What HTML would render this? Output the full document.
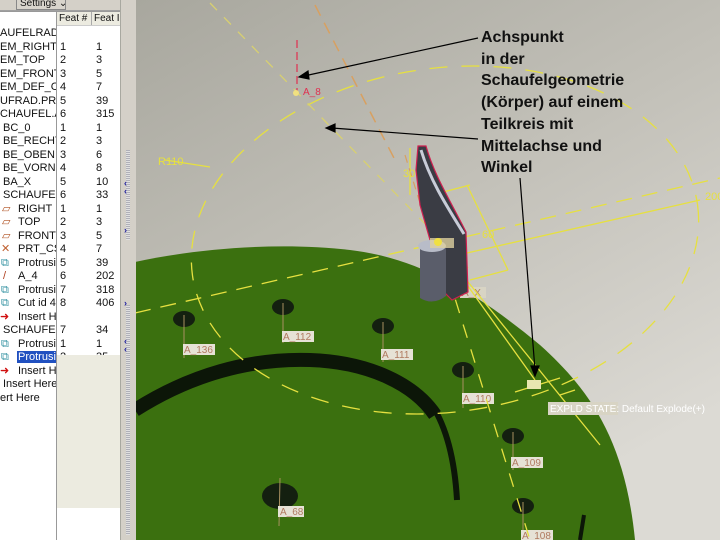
<!DOCTYPE html>
<html><head><meta charset="utf-8"><style>
*{margin:0;padding:0;box-sizing:border-box}
body{width:720px;height:540px;overflow:hidden;position:relative;font-family:"Liberation Sans",sans-serif;background:#fff}
#panel{position:absolute;left:0;top:0;width:122px;height:540px;background:#fff;font-size:11px;color:#111}
.row{position:absolute;height:13px;line-height:13px;white-space:nowrap}
.c1{position:absolute;left:0;width:56px;overflow:hidden}
.c2{position:absolute;left:60px}
.c3{position:absolute;left:96px}
#split{position:absolute;left:120px;top:0;width:16px;height:540px;background:#d4d0c8;border-left:1px solid #a8a8a0}
#split .dots{position:absolute;left:5px;width:4px;background:repeating-linear-gradient(#b0b0b8 0 1px,#e0e0e0 1px 2px)}
.ar{position:absolute;left:3px;color:#2020a0;font-size:9px;font-weight:bold}
.ann{position:absolute;left:481px;top:27px;font-size:16px;font-weight:bold;line-height:21.7px;color:#111;white-space:nowrap}
</style></head><body>
<svg width="720" height="540" style="position:absolute;left:0;top:0">
<defs>
<linearGradient id="bg" x1="0" y1="0" x2="0.6" y2="1">
<stop offset="0" stop-color="#a8a79e"/><stop offset="0.5" stop-color="#c2c0b8"/><stop offset="1" stop-color="#dcdad4"/></linearGradient>
</defs>
<rect x="135" y="0" width="585" height="540" fill="url(#bg)"/>
<path d="M135,262 C200,248 280,242 350,250 C420,258 480,295 540,345 C590,390 625,440 635,540 L135,540 Z" fill="#3b700f"/>
<path d="M135,410 C190,375 250,358 310,360 C370,362 415,385 435,415" stroke="#0c1608" stroke-width="14" fill="none"/>
<path d="M432,405 C448,430 455,465 457,500" stroke="#0c1608" stroke-width="6" fill="none"/>
<path d="M580,540 L584,515" stroke="#0c1608" stroke-width="4"/>
<g fill="#142010">
<ellipse cx="184" cy="319" rx="11" ry="8"/><ellipse cx="283" cy="307" rx="11" ry="8"/>
<ellipse cx="383" cy="326" rx="11" ry="8"/><ellipse cx="463" cy="370" rx="11" ry="8"/>
<ellipse cx="513" cy="436" rx="11" ry="8"/><ellipse cx="523" cy="506" rx="11" ry="8"/>
<ellipse cx="280" cy="496" rx="18" ry="13"/></g>
<g stroke="#a89060" stroke-width="1">
<line x1="184" y1="315" x2="184" y2="358"/><line x1="283" y1="303" x2="283" y2="343"/>
<line x1="383" y1="322" x2="383" y2="362"/><line x1="463" y1="366" x2="463" y2="408"/>
<line x1="513" y1="432" x2="513" y2="470"/><line x1="523" y1="502" x2="523" y2="540"/>
<line x1="280" y1="478" x2="279" y2="526"/></g>
<g font-size="10" fill="#b07a60" font-family="Liberation Sans">
<rect x="183" y="344" width="32" height="11" fill="#e6e2d6"/><text x="184" y="353">A_136</text>
<rect x="282" y="331" width="32" height="11" fill="#e6e2d6"/><text x="283" y="340">A_112</text>
<rect x="381" y="349" width="32" height="11" fill="#e6e2d6"/><text x="382" y="358">A_111</text>
<rect x="462" y="393" width="32" height="11" fill="#e6e2d6"/><text x="463" y="402">A_110</text>
<rect x="511" y="457" width="32" height="11" fill="#e6e2d6"/><text x="512" y="466">A_109</text>
<rect x="521" y="530" width="32" height="11" fill="#e6e2d6"/><text x="522" y="539">A_108</text>
<rect x="278" y="506" width="26" height="11" fill="#e6e2d6"/><text x="280" y="515">A_68</text>
<rect x="460" y="287" width="26" height="11" fill="#d8d4c4"/><text x="462" y="296">A_X</text>
</g>
<g fill="none" stroke="#e6e040" stroke-width="1.3">
<ellipse cx="445" cy="240" rx="255" ry="172" stroke-dasharray="18 14" transform="rotate(-8 445 240)"/>
<line x1="135" y1="313" x2="720" y2="178" stroke-dasharray="16 10"/>
<line x1="445" y1="258" x2="700" y2="200"/>
<line x1="210" y1="3" x2="470" y2="270" stroke-dasharray="10 10" stroke="#d8d070"/>
<line x1="440" y1="250" x2="530" y2="540" stroke-dasharray="14 12"/>
<line x1="435" y1="240" x2="535" y2="380"/>
<line x1="430" y1="235" x2="600" y2="445"/>
<line x1="432" y1="195" x2="470" y2="185"/><line x1="467" y1="185" x2="508" y2="270"/><line x1="470" y1="280" x2="508" y2="270"/>
<line x1="515" y1="392" x2="560" y2="378"/><line x1="575" y1="390" x2="560" y2="395"/>
<line x1="165" y1="160" x2="210" y2="167"/>
<line x1="410" y1="148" x2="410" y2="195"/>
</g>
<line x1="315" y1="5" x2="395" y2="160" stroke="#d8a060" stroke-width="1.5" stroke-dasharray="12 8"/>
<line x1="405" y1="155" x2="430" y2="235" stroke="#d8a060" stroke-width="1.2" stroke-dasharray="8 6"/>
<line x1="297" y1="40" x2="297" y2="92" stroke="#e03050" stroke-width="1.2" stroke-dasharray="8 4"/>
<text x="303" y="95" font-size="10" fill="#e03050" font-family="Liberation Sans">A_8</text>
<circle cx="296" cy="93" r="3" fill="#f0e080"/>
<path d="M418,146 L426,146 C434,175 450,200 466,232 L468,292 L452,300 L438,286 L430,240 L420,205 L416,170 Z" fill="#3a3c44" stroke="#d02050" stroke-width="1.2"/>
<path d="M421,150 C430,180 446,205 464,234" stroke="#c8ccd8" stroke-width="3" fill="none"/>
<path d="M420,248 L446,248 L446,296 Q433,306 420,298 Z" fill="#5a5d6a"/>
<ellipse cx="432" cy="246" rx="14" ry="6" fill="#b8bcc8"/>
<rect x="430" y="238" width="24" height="10" fill="#ddd0a0" opacity="0.8"/>
<circle cx="438" cy="242" r="4" fill="#f0e040"/>
<g font-family="Liberation Sans" font-size="11" fill="#e6e040">
<text x="403" y="177">30</text><text x="482" y="238">60</text><text x="705" y="200">200</text><text x="158" y="165">R110</text></g>
<rect x="527" y="380" width="14" height="9" fill="#e8e6b0"/>
<g stroke="#000" stroke-width="1.2" fill="#000">
<line x1="478" y1="38" x2="304" y2="76"/><polygon points="299,77 308,71 309,79"/>
<line x1="478" y1="139" x2="332" y2="128"/><polygon points="326,128 335,124 335,132"/>
<line x1="520" y1="178" x2="535" y2="370"/><polygon points="535,376 531,366 539,366"/>
</g>
<rect x="548" y="402" width="70" height="13" fill="#d8d4c4"/>
<text x="550" y="412" font-size="10" fill="#fff" font-family="Liberation Sans">EXPLD STATE: Default Explode(+)</text>
</svg>
<div class="ann">Achspunkt<br>in der<br>Schaufelgeometrie<br>(Körper) auf einem<br>Teilkreis mit<br>Mittelachse und<br>Winkel</div>

<div id="panel">
<div style="position:absolute;left:0;top:0;width:122px;height:11px;background:#d4d0c8;border-bottom:1px solid #a0a0a0"></div>
<div style="position:absolute;left:16px;top:-3px;width:50px;height:13px;border:1px solid #888;background:#d8d4cc;font-size:10px;line-height:11px;padding-left:3px;white-space:nowrap">Settings ⌄</div>
<div style="position:absolute;left:57px;top:12px;width:63px;height:14px;background:#ecebe0;border-bottom:1px solid #ccc;font-size:10px;line-height:14px;white-space:nowrap;overflow:hidden"><span style="position:absolute;left:2px">Feat #</span><span style="position:absolute;left:34px;border-left:1px solid #aaa;padding-left:2px">Feat ID</span></div>
<div style="position:absolute;left:0;top:11px;width:120px;height:1px;background:#999"></div>
</div>
<div style="position:absolute;left:0;top:27px;font-size:11px;color:#111">
<div class="row" style="top:0"><span class="c1">AUFELRAD.ASM</span></div>
<div class="row" style="top:13.5px"><span class="c1">EM_RIGHT</span><span class="c2">1</span><span class="c3">1</span></div>
<div class="row" style="top:27px"><span class="c1">EM_TOP</span><span class="c2">2</span><span class="c3">3</span></div>
<div class="row" style="top:40.5px"><span class="c1">EM_FRONT</span><span class="c2">3</span><span class="c3">5</span></div>
<div class="row" style="top:54px"><span class="c1">EM_DEF_CSYS</span><span class="c2">4</span><span class="c3">7</span></div>
<div class="row" style="top:67.5px"><span class="c1">UFRAD.PRT</span><span class="c2">5</span><span class="c3">39</span></div>
<div class="row" style="top:81px"><span class="c1">CHAUFEL.ASM</span><span class="c2">6</span><span class="c3">315</span></div>
<div class="row" style="top:94.5px"><span class="c1" style="padding-left:3px">BC_0</span><span class="c2">1</span><span class="c3">1</span></div>
<div class="row" style="top:108px"><span class="c1" style="padding-left:3px">BE_RECHTS</span><span class="c2">2</span><span class="c3">3</span></div>
<div class="row" style="top:121.5px"><span class="c1" style="padding-left:3px">BE_OBEN</span><span class="c2">3</span><span class="c3">6</span></div>
<div class="row" style="top:135px"><span class="c1" style="padding-left:3px">BE_VORNE</span><span class="c2">4</span><span class="c3">8</span></div>
<div class="row" style="top:148.5px"><span class="c1" style="padding-left:3px">BA_X</span><span class="c2">5</span><span class="c3">10</span></div>
<div class="row" style="top:162px"><span class="c1" style="padding-left:3px">SCHAUFEL</span><span class="c2">6</span><span class="c3">33</span></div>
<div class="row" style="top:175.5px"><span class="c1" style="padding-left:18px">RIGHT</span><span class="c2">1</span><span class="c3">1</span><span style="position:absolute;left:2px;color:#b05020">▱</span></div>
<div class="row" style="top:189px"><span class="c1" style="padding-left:18px">TOP</span><span class="c2">2</span><span class="c3">3</span><span style="position:absolute;left:2px;color:#b05020">▱</span></div>
<div class="row" style="top:202.5px"><span class="c1" style="padding-left:18px">FRONT</span><span class="c2">3</span><span class="c3">5</span><span style="position:absolute;left:2px;color:#b05020">▱</span></div>
<div class="row" style="top:216px"><span class="c1" style="padding-left:18px">PRT_CSYS</span><span class="c2">4</span><span class="c3">7</span><span style="position:absolute;left:1px;color:#c06030">✕</span></div>
<div class="row" style="top:229.5px"><span class="c1" style="padding-left:18px">Protrusion</span><span class="c2">5</span><span class="c3">39</span><span style="position:absolute;left:1px;color:#3090a0">⧉</span></div>
<div class="row" style="top:243px"><span class="c1" style="padding-left:18px">A_4</span><span class="c2">6</span><span class="c3">202</span><span style="position:absolute;left:3px;color:#b04020">/</span></div>
<div class="row" style="top:256.5px"><span class="c1" style="padding-left:18px">Protrusion</span><span class="c2">7</span><span class="c3">318</span><span style="position:absolute;left:1px;color:#3090a0">⧉</span></div>
<div class="row" style="top:270px"><span class="c1" style="padding-left:18px">Cut id 406</span><span class="c2">8</span><span class="c3">406</span><span style="position:absolute;left:1px;color:#3090a0">⧉</span></div>
<div class="row" style="top:283.5px"><span class="c1" style="padding-left:18px">Insert Here</span><span style="position:absolute;left:0;color:#d01010">➜</span></div>
<div class="row" style="top:297px"><span class="c1" style="padding-left:3px">SCHAUFEL</span><span class="c2">7</span><span class="c3">34</span></div>
<div class="row" style="top:310.5px"><span class="c1" style="padding-left:18px">Protrusion</span><span class="c2">1</span><span class="c3">1</span><span style="position:absolute;left:1px;color:#3090a0">⧉</span></div>
<div class="row" style="top:324px"><span class="c1" style="padding-left:17px"><span style="background:#2050c0;color:#fff;padding:0 1px">Protrusion</span></span><span class="c2">2</span><span class="c3">35</span><span style="position:absolute;left:1px;color:#3090a0">⧉</span></div>
<div class="row" style="top:337.5px"><span class="c1" style="padding-left:18px">Insert Here</span><span style="position:absolute;left:0;color:#d01010">➜</span></div>
<div class="row" style="top:351px"><span class="c1" style="padding-left:3px;width:60px">Insert Here</span></div>
<div class="row" style="top:364.5px"><span class="c1">ert Here</span></div>
</div>
<div style="position:absolute;left:57px;top:355px;width:63px;height:153px;background:#ecebe0"></div>
<div style="position:absolute;left:56px;top:12px;width:1px;height:528px;background:#999"></div>
<div id="split">
<div class="dots" style="top:150px;height:90px"></div>
<div class="dots" style="top:305px;height:230px"></div>
<div class="ar" style="top:178px">‹</div><div class="ar" style="top:186px">‹</div>
<div class="ar" style="top:225px">›</div><div class="ar" style="top:298px">›</div>
<div class="ar" style="top:336px">‹</div><div class="ar" style="top:344px">‹</div>
</div>
</body></html>
